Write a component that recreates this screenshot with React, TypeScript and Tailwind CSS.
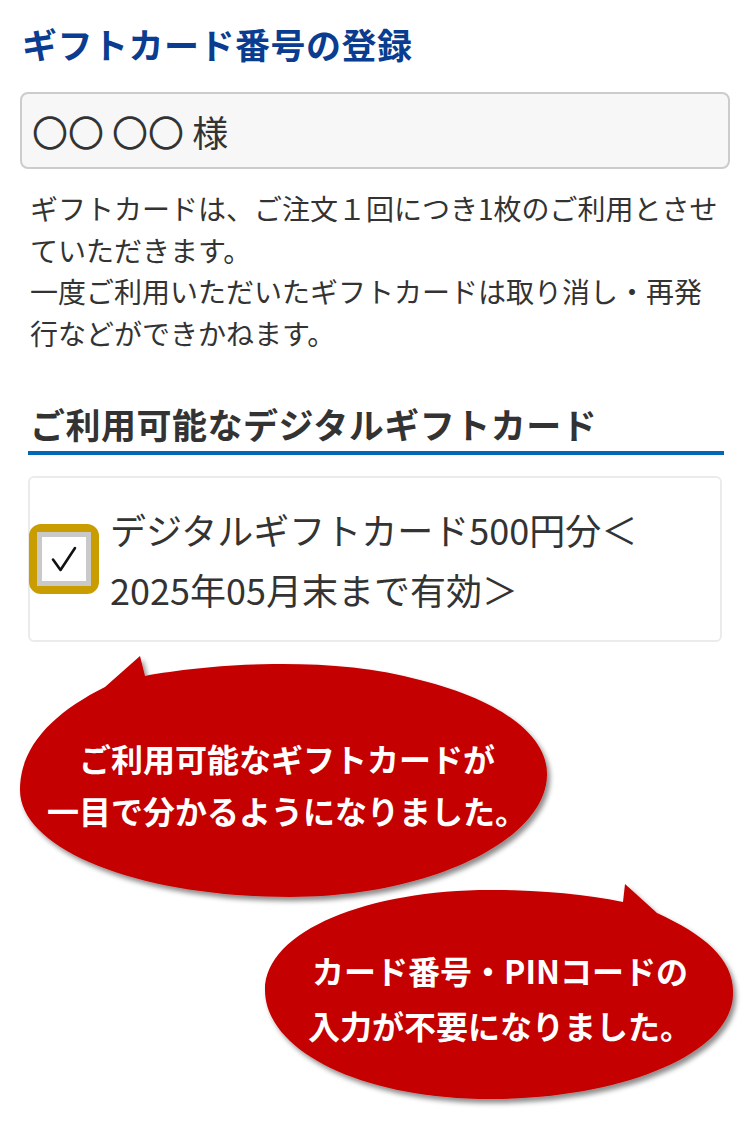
const FONT = "font-['Noto_Sans_CJK_JP','Noto_Sans',sans-serif]"

const BUBBLE_TOP = 642

function CheckBox() {
  return (
    <span className="-ml-px flex h-[70px] w-[70px] shrink-0 items-center justify-center rounded-[12px] border-[8px] border-[#c99c00] bg-white">
      <span className="flex h-full w-full items-center justify-center border-[5px] border-[#c9c9c9] bg-white">
        <svg width="30" height="30" viewBox="0 0 30 30" fill="none">
          <path d="M4 15.5 L11.5 26 L26 4" stroke="#111" strokeWidth="2.6" strokeLinecap="round" strokeLinejoin="round" />
        </svg>
      </span>
    </span>
  )
}

function Bubbles() {
  return (
    <svg
      className="pointer-events-none absolute inset-0"
      width="750"
      height="495"
      viewBox={`0 ${BUBBLE_TOP} 750 495`}
    >
      <defs>
        <filter id="bubble-shadow" x="-10%" y="-10%" width="125%" height="130%">
          <feDropShadow dx="3" dy="4" stdDeviation="2.5" floodColor="#000" floodOpacity="0.45" />
        </filter>
      </defs>
      <g fill="#c40000" filter="url(#bubble-shadow)">
        <path d="M105 687 L140 656 L145 676 C210 664 330 655 420 680 C500 700 548 735 547 775 C546 840 430 897 290 897 C140 897 20 850 20 790 C20 745 55 712 105 687 Z" />
        <path d="M623 902 L625 884 L657 913 C705 935 735 960 733 995 C731 1055 620 1099 490 1099 C360 1099 265 1050 265 990 C265 930 370 890 490 890 C540 890 585 894 623 902 Z" />
      </g>
    </svg>
  )
}

export default function App() {
  return (
    <div className={`w-[750px] bg-white ${FONT}`}>
      <h1 className="pl-[22px] pt-[22px] text-[35px] font-bold leading-[44px] tracking-[0.5px] text-[#0a3d8f]">
        ギフトカード番号の登録
      </h1>

      <div className="mx-[20px] mt-[26px] flex h-[77px] items-center rounded-[8px] border-2 border-[#cccccc] bg-[#f7f7f7] pl-[10px] text-[36px] text-[#333]">
        〇〇 〇〇 様
      </div>

      <p className="mt-[19px] pl-[30px] text-[28px] leading-[41.5px] text-[#333]">
        ギフトカードは、ご注文１回につき1枚のご利用とさせ
        <br />
        ていただきます。
        <br />
        一度ご利用いただいたギフトカードは取り消し・再発
        <br />
        行などができかねます。
      </p>

      <div className="ml-[28px] mr-[26px] mt-[48px] border-b-4 border-[#0068b7] pb-[5px]">
        <h2 className="pl-[2px] text-[35px] font-bold leading-[44px] tracking-[0.5px] text-[#333]">
          ご利用可能なデジタルギフトカード
        </h2>
      </div>

      <div className="mx-[28px] mt-[21px] flex items-center gap-[11px] rounded-md border-2 border-[#ebebeb] py-[21px]">
        <CheckBox />
        <span className="text-[36px] leading-[60px] text-[#333]">
          デジタルギフトカード500円分＜
          <br />
          2025年05月末まで有効＞
        </span>
      </div>

      <div className="relative h-[495px]">
        <Bubbles />
        <div className="relative ml-[27px] w-[520px] pt-[90px] text-center text-[32px] font-bold leading-[52px] text-white">
          ご利用可能なギフトカードが
          <br />
          一目で分かるようになりました。
        </div>
        <div className="relative ml-[265px] mt-[107px] w-[470px] text-center text-[32px] font-bold leading-[55px] text-white">
          カード番号・PINコードの
          <br />
          入力が不要になりました。
        </div>
      </div>
    </div>
  )
}
